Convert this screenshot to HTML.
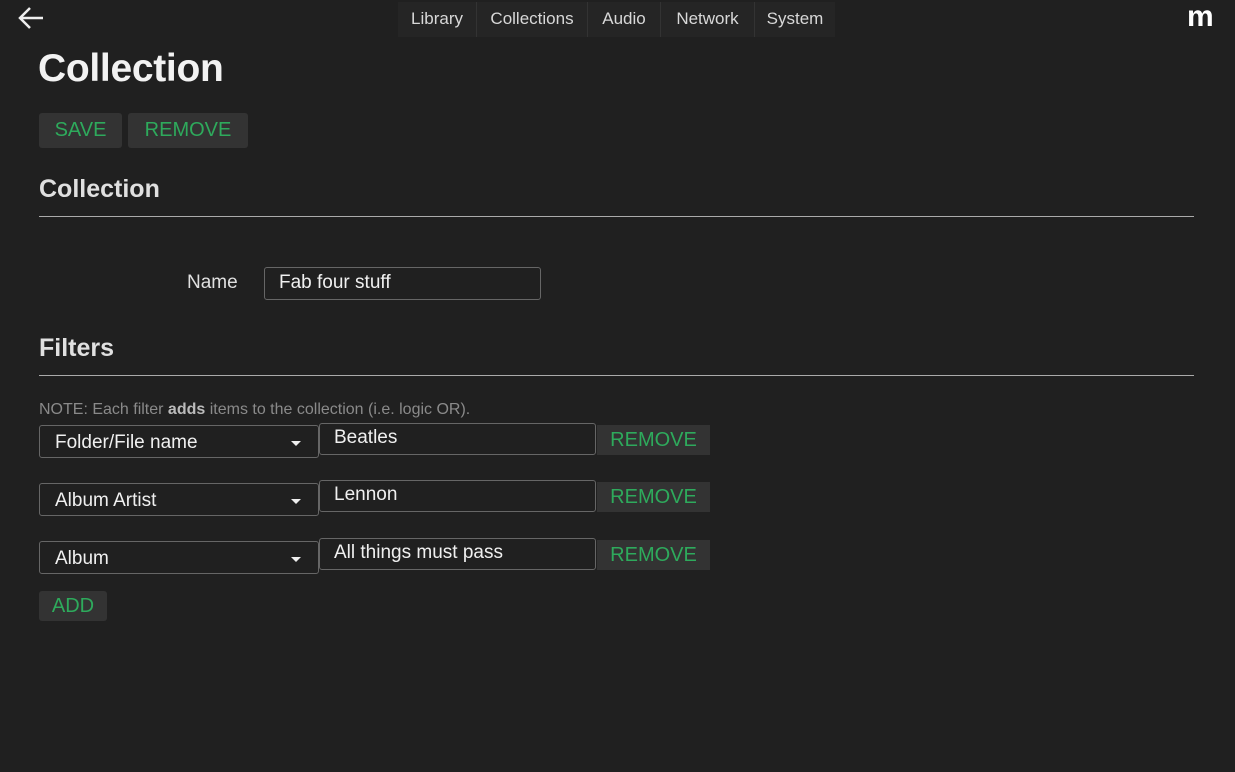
<!DOCTYPE html>
<html><head><style>
body{margin:0;width:1235px;height:772px;background:#202020;font-family:"Liberation Sans",sans-serif;color:#e0e0e0;position:relative;overflow:hidden}
.a{position:absolute}
.nav{left:398px;top:2px;height:35px;display:flex;background:#252525}
.nav div{text-align:center;line-height:34px;font-size:17px;color:#d8d8d8;border-right:1px solid #333;box-sizing:border-box}
.btn{background:#333;color:#2eaa5c;font-size:20px;border-radius:3px;text-align:center}
.hr{left:39px;width:1155px;height:1px;background:#aaa}
.sel,.inp{border:1px solid #666;border-radius:3px;color:#f0f0f0;font-size:19px;box-sizing:border-box}
.sel{width:280px;height:33px;padding:6px 15px}
.sel:after{content:"";position:absolute;right:17px;top:15px;border:5px solid transparent;border-top-color:#eee;border-bottom:0}
.inp{width:277px;height:32px;padding:3px 14px}
</style></head><body>
<svg class="a" style="left:17px;top:5px" width="28" height="26" viewBox="0 0 28 26"><path d="M26 13H4M13 3L3 13l10 10" stroke="#eee" stroke-width="2.5" fill="none"/></svg>
<div class="a nav"><div style="width:79px">Library</div><div style="width:111px">Collections</div><div style="width:73px">Audio</div><div style="width:94px">Network</div><div style="width:80px;border:0">System</div></div>
<div class="a" style="left:1187px;top:0px;font-size:30px;font-weight:bold;color:#fff">m</div>
<div class="a" style="left:38px;top:47px;font-size:39px;font-weight:bold;color:#f2f2f2;letter-spacing:-0.3px">Collection</div>
<div class="a btn" style="left:39px;top:113px;width:83px;height:35px;line-height:35px">SAVE</div>
<div class="a btn" style="left:128px;top:113px;width:120px;height:35px;line-height:35px">REMOVE</div>
<div class="a" style="left:39px;top:175px;font-size:25px;font-weight:bold">Collection</div>
<div class="a hr" style="top:216px"></div>
<div class="a" style="left:187px;top:272px;font-size:19px">Name</div>
<div class="a inp" style="left:264px;top:267px;width:277px;height:33px;padding:4px 14px">Fab four stuff</div>
<div class="a" style="left:39px;top:334px;font-size:25px;font-weight:bold">Filters</div>
<div class="a hr" style="top:375px"></div>
<div class="a" style="left:39px;top:401px;font-size:16px;color:#8a8a8a">NOTE: Each filter <b style="color:#bbb">adds</b> items to the collection (i.e. logic OR).</div>
<div class="a sel" style="left:39px;top:425px">Folder/File name</div>
<div class="a inp" style="left:319px;top:423px">Beatles</div>
<div class="a btn" style="left:597px;top:425px;width:113px;height:30px;line-height:30px;border-radius:0">REMOVE</div>
<div class="a sel" style="left:39px;top:483px">Album Artist</div>
<div class="a inp" style="left:319px;top:480px">Lennon</div>
<div class="a btn" style="left:597px;top:482px;width:113px;height:30px;line-height:30px;border-radius:0">REMOVE</div>
<div class="a sel" style="left:39px;top:541px">Album</div>
<div class="a inp" style="left:319px;top:538px">All things must pass</div>
<div class="a btn" style="left:597px;top:540px;width:113px;height:30px;line-height:30px;border-radius:0">REMOVE</div>
<div class="a btn" style="left:39px;top:591px;width:68px;height:30px;line-height:30px">ADD</div>
</body></html>
